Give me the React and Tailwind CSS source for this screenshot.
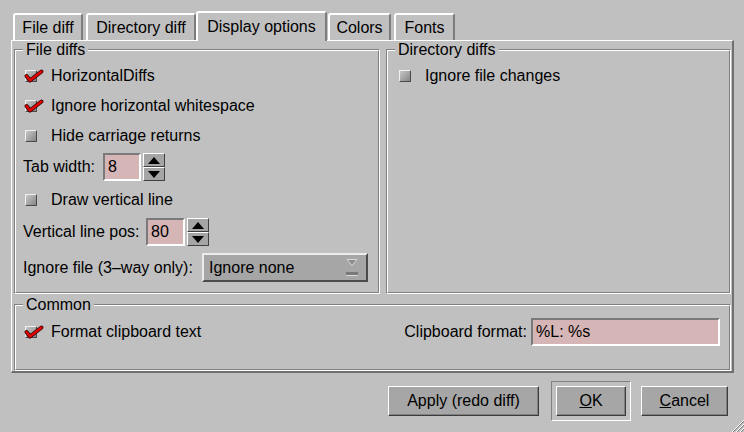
import React from 'react';

const face = 'bg-[#c0c0c0]';

function Tab({ label, active, className }) {
  return (
    <div
      className={`${className} ${
        active ? 'h-[30px] -mb-px relative z-10 bg-[#c0c0c0]' : 'h-[27px]'
      } flex items-center justify-center border-l-2 border-t-2 border-r-2 border-l-white border-t-white border-r-[#7c7c7c] rounded-t-[3px]`}
    >
      {label}
    </div>
  );
}

function Group({ title, className, children }) {
  return (
    <div className={`relative border border-t-[#808080] border-l-[#808080] border-b-white border-r-white ${className}`}>
      <div className="h-full border border-t-white border-l-white border-b-[#808080] border-r-[#808080]">
        {children}
      </div>
      <span className="absolute left-[8px] -top-[9px] bg-[#c0c0c0] px-[3px] leading-[18px]">{title}</span>
    </div>
  );
}

function Check({ checked }) {
  return (
    <span className="relative inline-block shrink-0 w-[12px] h-[12px] border border-t-[#f0f0f0] border-l-[#f0f0f0] border-b-[#4a4a4a] border-r-[#4a4a4a] bg-linear-to-br from-[#c8c8c8] to-[#868686]">
      {checked && (
        <svg className="absolute -left-[1px] -top-[1px] w-[18px] h-[14px] overflow-visible" viewBox="0 0 18 14">
          <polyline points="1.5,6 5,10.5 16.5,1.5" fill="none" stroke="#300000" strokeWidth="4" strokeLinejoin="round" strokeLinecap="round" />
          <polyline points="1.5,6 5,10.5 16.5,1.5" fill="none" stroke="#e40000" strokeWidth="2.4" strokeLinejoin="round" strokeLinecap="round" />
        </svg>
      )}
    </span>
  );
}

function CheckRow({ label, checked, className }) {
  return (
    <div className={`flex items-center gap-[14px] ${className}`}>
      <Check checked={checked} />
      <span>{label}</span>
    </div>
  );
}

function SpinBtn({ up }) {
  return (
    <div className="h-[14px] flex items-center justify-center bg-[#a5a5a5] border border-t-white border-l-white border-b-[#404040] border-r-[#404040]">
      <svg width="12" height="7" viewBox="0 0 12 7">
        {up ? <polygon points="6,0 12,7 0,7" fill="#000" /> : <polygon points="0,0 12,0 6,7" fill="#000" />}
      </svg>
    </div>
  );
}

function Spin({ value, width }) {
  return (
    <div className="flex items-center gap-[2px]">
      <div className={`${width} h-[28px] flex items-center pl-[3px] bg-[#d5b5b5] border-2 border-t-[#7a7a7a] border-l-[#7a7a7a] border-b-white border-r-white`}>
        {value}
      </div>
      <div className="flex flex-col w-[22px]">
        <SpinBtn up />
        <SpinBtn />
      </div>
    </div>
  );
}

function Button({ children, className }) {
  return (
    <div className={`h-[30px] flex items-center justify-center bg-[#a6a6a6] border border-t-white border-l-white border-b-[#3c3c3c] border-r-[#3c3c3c] shadow-[inset_-1px_-1px_0_#808080] ${className}`}>
      {children}
    </div>
  );
}

export default function App() {
  return (
    <div className={`relative w-[744px] h-[432px] overflow-hidden ${face} text-black text-[16px] font-['Liberation_Sans',Arial,sans-serif] pt-[10px]`}>
      {/* tab bar */}
      <div className="flex items-end h-[30px] pl-[13px]">
        <Tab label="File diff" className="w-[70px]" />
        <Tab label="Directory diff" className="ml-[3px] w-[110px]" />
        <Tab label="Display options" active className="w-[131px]" />
        <Tab label="Colors" className="ml-[1px] w-[63px]" />
        <Tab label="Fonts" className="ml-[3px] w-[61px]" />
      </div>

      {/* tab page */}
      <div className="ml-[11px] w-[723px] border-l border-t border-r-2 border-b-2 border-l-white border-t-white border-r-[#707070] border-b-[#707070] pt-[8px] pl-[2px] pr-[1px]">
        <div className="flex gap-[6px] h-[245px]">
          <Group title="File diffs" className="w-[366px]">
            <div className="flex flex-col pt-[10px] pl-[9px]">
              <CheckRow label="HorizontalDiffs" checked className="h-[30px]" />
              <CheckRow label="Ignore horizontal whitespace" checked className="h-[30px]" />
              <CheckRow label="Hide carriage returns" className="h-[30px]" />
              <div className="h-[32px] flex items-center gap-[4px] -ml-[2px]">
                <span className="w-[76px]">Tab width:</span>
                <Spin value="8" width="w-[38px]" />
              </div>
              <CheckRow label="Draw vertical line" className="h-[34px]" />
              <div className="h-[30px] flex items-center gap-[4px] -ml-[2px]">
                <span className="w-[119px]">Vertical line pos:</span>
                <Spin value="80" width="w-[39px]" />
              </div>
              <div className="mt-[6px] h-[29px] flex items-center gap-[4px] -ml-[2px]">
                <span className="w-[175px]">Ignore file (3–way only):</span>
                <div className="w-[166px] h-[29px] flex items-center justify-between pl-[5px] pr-[8px] bg-[#a6a6a6] border-2 border-t-[#ececec] border-l-[#ececec] border-b-[#4a4a4a] border-r-[#4a4a4a]">
                  <span>Ignore none</span>
                  <svg width="12" height="17" viewBox="0 0 12 17">
                    <polygon points="1,0.5 11,0.5 6,6.5" fill="#8c8c8c" stroke="#d8d8d8" strokeWidth="1" />
                    <rect x="0" y="13" width="12" height="3" fill="#7a7a7a" />
                    <rect x="0" y="16" width="12" height="1" fill="#d8d8d8" />
                  </svg>
                </div>
              </div>
            </div>
          </Group>

          <Group title="Directory diffs" className="flex-1">
            <div className="flex flex-col pt-[10px] pl-[11px]">
              <CheckRow label="Ignore file changes" className="h-[30px]" />
            </div>
          </Group>
        </div>

        <Group title="Common" className="mt-[10px] h-[67px]">
          <div className="flex items-center pt-[12px] pl-[9px] pr-[9px]">
            <CheckRow label="Format clipboard text" checked className="h-[28px]" />
            <div className="flex-1" />
            <span className="mr-[4px]">Clipboard format:</span>
            <div className="w-[189px] h-[28px] flex items-center pl-[3px] bg-[#d5b5b5] border-2 border-t-[#7a7a7a] border-l-[#7a7a7a] border-b-white border-r-white">
              %L: %s
            </div>
          </div>
        </Group>
      </div>

      {/* dialog buttons */}
      <div className="flex items-center justify-end h-[40px] mt-[8px] pr-[16px]">
        <Button className="w-[151px]">Apply (redo diff)</Button>
        <div className="ml-[12px] w-[80px] h-[40px] flex items-center justify-center border border-t-[#808080] border-l-[#808080] border-b-white border-r-white">
          <Button className="w-[70px]"><span><u>O</u>K</span></Button>
        </div>
        <Button className="ml-[10px] w-[87px]"><span><u>C</u>ancel</span></Button>
      </div>

      {/* size grip */}
      <svg className="absolute right-0 bottom-0" width="14" height="14" viewBox="0 0 14 14">
        <line x1="14" y1="2" x2="2" y2="14" stroke="#ffffff" />
        <line x1="14" y1="3" x2="3" y2="14" stroke="#808080" />
        <line x1="14" y1="6" x2="6" y2="14" stroke="#ffffff" />
        <line x1="14" y1="7" x2="7" y2="14" stroke="#808080" />
        <line x1="14" y1="10" x2="10" y2="14" stroke="#ffffff" />
        <line x1="14" y1="11" x2="11" y2="14" stroke="#808080" />
      </svg>
    </div>
  );
}
